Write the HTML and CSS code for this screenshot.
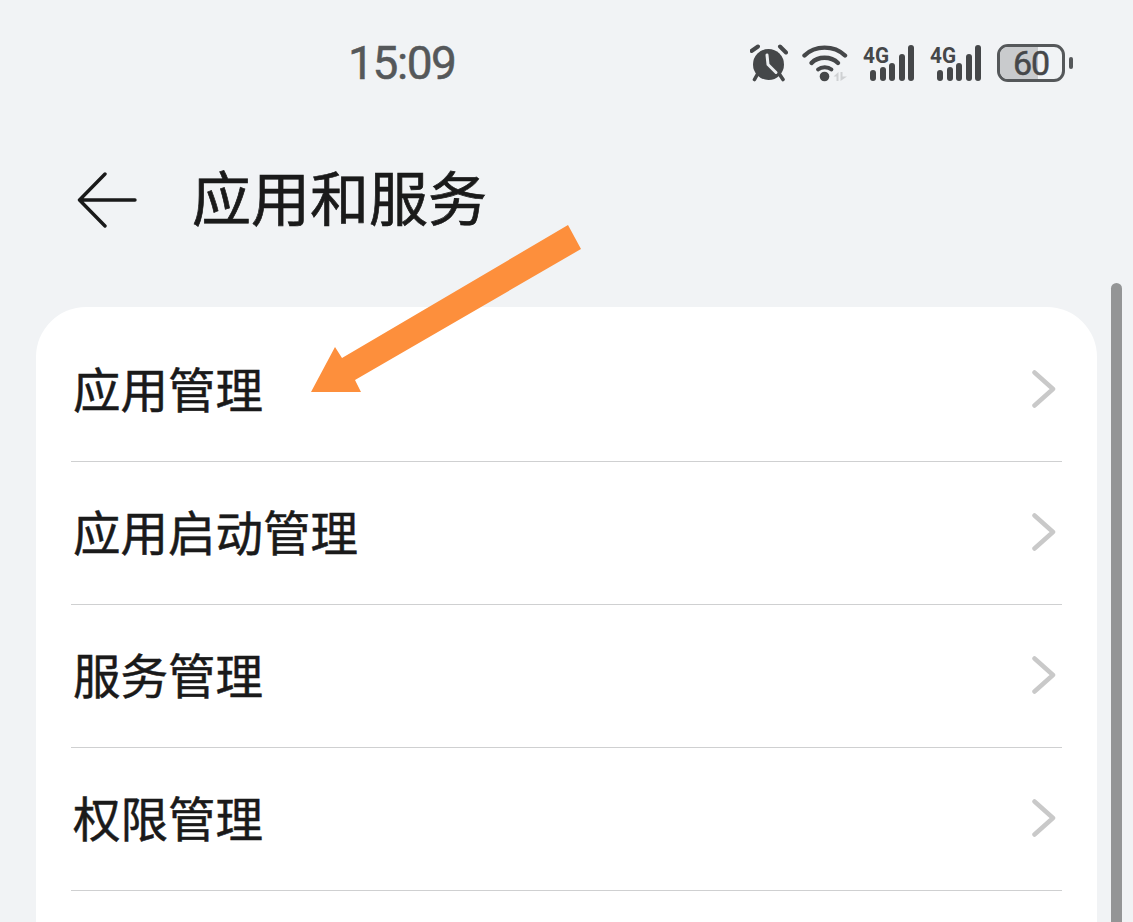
FILE: index.html
```html
<!DOCTYPE html>
<html lang="zh-CN">
<head>
<meta charset="utf-8">
<title>应用和服务</title>
<link rel="stylesheet" href="styles.css">
</head>
<body>
<div class="page">
  <header class="status">
    <div class="time">15:09</div>
    <div class="status-icons">
      <svg class="ic-alarm" width="38" height="38" viewBox="0 0 38 38">
        <path d="M1.500 7 L8 2.500 M36 8.500 L30 2.500" stroke="#454749" stroke-width="4" stroke-linecap="round" fill="none"/>
        <path d="M7 31 L4.500 35.500 M30 31 L33 35.500" stroke="#454749" stroke-width="3.600" stroke-linecap="round" fill="none"/>
        <circle cx="18.500" cy="20.500" r="15.500" fill="#454749"/>
        <path d="M17 11 L18 20.500 L26 28.500" stroke="#eceef0" stroke-width="3" stroke-linecap="round" stroke-linejoin="round" fill="none"/>
      </svg>
      <svg class="ic-wifi" width="46" height="38" viewBox="0 0 46 38">
        <path d="M2.500 11.500 C13 1 32 1 43 11.500" stroke="#454749" stroke-width="4.400" stroke-linecap="round" fill="none"/>
        <path d="M9.500 19 C16 12 29 12 36 19" stroke="#454749" stroke-width="4.400" stroke-linecap="round" fill="none"/>
        <path d="M16 25.500 C19.500 22.500 26 22.500 29.500 25.500" stroke="#454749" stroke-width="3.800" stroke-linecap="round" fill="none"/>
        <circle cx="22.500" cy="32.500" r="4.800" fill="#454749"/>
        <path d="M31.500 32.500 L36.500 28 V37 H34.500 V32.500 Z M38.500 28 H40.500 V32.500 H45 L38.500 37 Z" fill="#cfd1d3"/>
      </svg>
      <div class="signal">
        <span class="net">4G</span>
        <i class="b1"></i><i class="b2"></i><i class="b3"></i><i class="b4"></i><i class="b5"></i>
      </div>
      <div class="signal second">
        <span class="net">4G</span>
        <i class="b1"></i><i class="b2"></i><i class="b3"></i><i class="b4"></i><i class="b5"></i>
      </div>
      <div class="battery">
        <div class="battery-shell"><div class="battery-fill"></div><span class="battery-num">60</span></div>
        <div class="battery-nub"></div>
      </div>
    </div>
  </header>

  <div class="titlebar">
    <svg class="back" width="60" height="56" viewBox="0 0 60 56">
      <path d="M58 28 H3 M28 2 L2.500 28 L28 54" stroke="#1a1a1a" stroke-width="3.400" stroke-linecap="round" stroke-linejoin="round" fill="none"/>
    </svg>
    <h1 class="title">应用和服务</h1>
  </div>

  <main class="card">
    <div class="row"><span class="label">应用管理</span><svg class="chev" width="24" height="38" viewBox="0 0 24 38"><path d="M2.500 2.500 L21 19 L2.500 35.500" class="chev-path"/></svg></div>
    <div class="row"><span class="label">应用启动管理</span><svg class="chev" width="24" height="38" viewBox="0 0 24 38"><path d="M2.500 2.500 L21 19 L2.500 35.500" class="chev-path"/></svg></div>
    <div class="row"><span class="label">服务管理</span><svg class="chev" width="24" height="38" viewBox="0 0 24 38"><path d="M2.500 2.500 L21 19 L2.500 35.500" class="chev-path"/></svg></div>
    <div class="row"><span class="label">权限管理</span><svg class="chev" width="24" height="38" viewBox="0 0 24 38"><path d="M2.500 2.500 L21 19 L2.500 35.500" class="chev-path"/></svg></div>
    <div class="row empty"></div>
  </main>

  <div class="scrollbar"></div>

  <svg class="arrow" width="1133" height="922" viewBox="0 0 1133 922">
    <polygon points="568,225 581,249 355,380 361,392 311,392 335,347 342,358" fill="#fd8f3c"/>
  </svg>
</div>
</body>
</html>
```

FILE: styles.css
```css
* { box-sizing: border-box; }
html, body { margin: 0; padding: 0; }
body {
  background: #f1f3f5;
  font-family: "Noto Sans CJK SC", "Noto Sans", sans-serif;
  color: #1a1a1a;
}
.page {
  position: relative;
  width: 1133px;
  height: 922px;
  overflow: hidden;
}

/* status bar */
.status {
  display: flex;
  align-items: center;
  height: 82px;
  padding: 43px 0 0 348px;
}
.time {
  font-family: Roboto, "Noto Sans", sans-serif;
  font-size: 46px;
  font-weight: 400;
  -webkit-text-stroke: 0.5px #55585a;
  letter-spacing: -1.400px;
  line-height: 40px;
  color: #55585a;
  width: 402px;
}
.status-icons {
  display: flex;
  align-items: center;
  height: 39px;
}
.ic-alarm { flex: none; }
.ic-wifi { flex: none; margin-left: 14px; }
.signal {
  position: relative;
  flex: none;
  width: 51px;
  height: 36px;
  margin-left: 15px;
  display: flex;
  align-items: flex-end;
  justify-content: space-between;
  padding-left: 7px;
}
.signal.second { margin-left: 16px; }
.signal i {
  display: block;
  width: 6px;
  border-radius: 3px;
  background: #454749;
}
.signal .b1 { height: 11px; }
.signal .b2 { height: 14px; }
.signal .b3 { height: 18px; }
.signal .b4 { height: 27px; }
.signal .b5 { height: 36px; }
.net {
  position: absolute;
  left: 0;
  top: 1px;
  font-family: Roboto, sans-serif;
  font-size: 22.500px;
  font-weight: 700;
  line-height: 18px;
  color: #454749;
  transform: scaleX(0.92);
  transform-origin: left center;
}
.battery {
  flex: none;
  display: flex;
  align-items: center;
  margin-left: 16px;
}
.battery-shell {
  position: relative;
  width: 68px;
  height: 38px;
  border: 3px solid #55585a;
  border-radius: 11px;
  display: flex;
  align-items: center;
  justify-content: center;
  overflow: hidden;
}
.battery-fill {
  position: absolute;
  left: 0;
  top: 0;
  bottom: 0;
  width: 62%;
  background: #c9cbcd;
}
.battery-num {
  position: relative;
  font-family: Roboto, sans-serif;
  font-size: 34px;
  font-weight: 400;
  -webkit-text-stroke: 0.5px #454749;
  letter-spacing: -1px;
  line-height: 32px;
  color: #454749;
}
.battery-nub {
  width: 4px;
  height: 12px;
  margin-left: 4px;
  border-radius: 2px;
  background: #55585a;
}

/* title */
.titlebar {
  display: flex;
  align-items: center;
  height: 90px;
  margin-top: 69px;
  padding-left: 77px;
}
.back { flex: none; margin-top: 7px; }
.title {
  margin: 0 0 0 55px;
  font-size: 59px;
  font-weight: 400;
  -webkit-text-stroke: 0.7px #1a1a1a;
  line-height: 80px;
  color: #1a1a1a;
}

/* list card */
.card {
  margin: 66px 0 0 36px;
  width: 1061px;
  padding: 12px 35px 0;
  background: #fff;
  border-radius: 50px 50px 0 0;
}
.row {
  display: flex;
  align-items: center;
  justify-content: space-between;
  height: 143px;
  padding: 0 6px 5px 2px;
  border-bottom: 1px solid #cfd0d1;
}
.row.empty { border-bottom: 0; }
.label {
  font-size: 47.500px;
  font-weight: 400;
  -webkit-text-stroke: 0.5px #1a1a1a;
  line-height: 60px;
  color: #1a1a1a;
}
.chev { flex: none; margin-top: 2px; }
.chev-path {
  fill: none;
  stroke: #c9c9c9;
  stroke-width: 4.500;
  stroke-linecap: round;
  stroke-linejoin: round;
}

/* overlays */
.scrollbar {
  position: absolute;
  left: 1111px;
  top: 283px;
  width: 11px;
  height: 660px;
  border-radius: 6px;
  background: #949596;
}
.arrow {
  position: absolute;
  left: 0;
  top: 0;
  pointer-events: none;
}
```
